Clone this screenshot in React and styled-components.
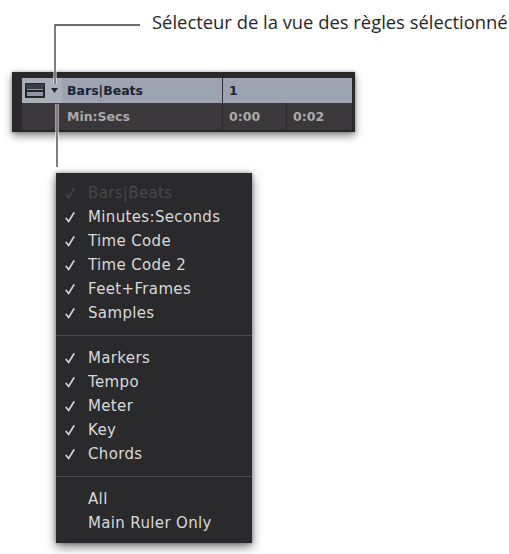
import React from "react";
import styled, { createGlobalStyle } from "styled-components";

const GlobalStyle = createGlobalStyle`
  html, body {
    margin: 0;
    padding: 0;
    background: #ffffff;
  }
`;

const Page = styled.div`
  position: relative;
  width: 509px;
  height: 554px;
  background: #ffffff;
  overflow: hidden;
`;

const Callout = styled.div`
  height: 62px;
  padding: 10px 0 0 152px;
  font-family: "Open Sans", "DejaVu Sans", sans-serif;
  font-size: 18.4px;
  line-height: 24px;
  color: #262626;
  white-space: nowrap;
`;

const Ruler = styled.div`
  margin-left: 12px;
  width: 330px;
  padding: 6px 3px 2px 10px;
  background: #2a2829;
  box-shadow: 0 4px 8px rgba(0, 0, 0, 0.45), 0 0 3px rgba(0, 0, 0, 0.3);
`;

const Row = styled.div`
  display: grid;
  grid-template-columns: 40px 160px 64px 1fr;
  height: ${(p) => p.h}px;
  background: ${(p) => (p.light ? "#9ba4b0" : "#3a383a")};
  font-family: "DejaVu Sans", sans-serif;
  font-weight: bold;
  font-size: 12.5px;
  color: ${(p) => (p.light ? "#1c2230" : "#aaaaaa")};
`;

const Selector = styled.div`
  display: flex;
  align-items: center;
  gap: 6px;
  padding-left: 3px;
  background: ${(p) => (p.light ? "#a9afb8" : "transparent")};
`;

const Cell = styled.div`
  display: flex;
  align-items: center;
  padding-left: ${(p) => p.pad || 6}px;
  border-left: ${(p) => (p.divider ? `1px solid ${p.divider}` : "none")};
  grid-column: ${(p) => p.span || "auto"};
  white-space: nowrap;
`;

const Menu = styled.div`
  margin: 41px 0 0 56px;
  width: 196px;
  padding: 8px 0;
  background: #2a292c;
  box-shadow: 0 4px 10px rgba(0, 0, 0, 0.5), 0 0 4px rgba(0, 0, 0, 0.35);
  font-family: "DejaVu Sans", sans-serif;
  font-size: 15px;
  letter-spacing: 0.35px;
`;

const Item = styled.div`
  display: flex;
  align-items: center;
  height: 24px;
  color: ${(p) => (p.disabled ? "#48474a" : "#d9d9d9")};
`;

const CheckSlot = styled.span`
  display: flex;
  align-items: center;
  width: 32px;
  padding-left: 9px;
  box-sizing: border-box;
`;

const Separator = styled.div`
  height: 1px;
  margin: 10px 0;
  background: #48474b;
`;

const Leaders = styled.svg`
  position: absolute;
  top: 0;
  left: 0;
  pointer-events: none;
`;

const CheckMark = ({ dim }) => (
  <svg width="10" height="11" viewBox="0 0 10 11">
    <path
      d="M1.2 6.4 L3.6 9.6 L8.8 1"
      fill="none"
      stroke={dim ? "#47464a" : "#d4d4d4"}
      strokeWidth="1.7"
      strokeLinecap="round"
      strokeLinejoin="round"
    />
  </svg>
);

const ViewIcon = () => (
  <svg width="20" height="15" viewBox="0 0 20 15">
    <rect x="1" y="1" width="18" height="13" fill="#8e96a2" stroke="#23262c" strokeWidth="2" />
    <rect x="1" y="1" width="18" height="5" fill="#3a3d44" />
    <line x1="1" y1="8" x2="19" y2="8" stroke="#23262c" strokeWidth="2" />
  </svg>
);

const Caret = () => (
  <svg width="7" height="5" viewBox="0 0 7 5">
    <path d="M0 0 H7 L3.5 5 Z" fill="#1c2230" />
  </svg>
);

const groups = [
  [
    { label: "Bars|Beats", disabled: true },
    { label: "Minutes:Seconds" },
    { label: "Time Code" },
    { label: "Time Code 2" },
    { label: "Feet+Frames" },
    { label: "Samples" },
  ],
  [
    { label: "Markers" },
    { label: "Tempo" },
    { label: "Meter" },
    { label: "Key" },
    { label: "Chords" },
  ],
  [
    { label: "All", plain: true },
    { label: "Main Ruler Only", plain: true },
  ],
];

const App = () => {
  return (
    <>
      <GlobalStyle />
      <Page>
        <Callout>Sélecteur de la vue des règles sélectionné</Callout>

        <Ruler>
          <Row light h={25}>
            <Selector light>
              <ViewIcon />
              <Caret />
            </Selector>
            <Cell pad={5}>Bars|Beats</Cell>
            <Cell divider="#2c2f36" span="3 / 5">
              1
            </Cell>
          </Row>
          <Row h={27}>
            <Selector />
            <Cell pad={5}>Min:Secs</Cell>
            <Cell divider="#2a2829">0:00</Cell>
            <Cell divider="#2a2829">0:02</Cell>
          </Row>
        </Ruler>

        <Menu>
          {groups.map((group, gi) => (
            <React.Fragment key={gi}>
              {gi > 0 && <Separator />}
              {group.map((it) => (
                <Item key={it.label} disabled={it.disabled}>
                  <CheckSlot>{!it.plain && <CheckMark dim={it.disabled} />}</CheckSlot>
                  {it.label}
                </Item>
              ))}
            </React.Fragment>
          ))}
        </Menu>

        <Leaders width="509" height="554">
          <path d="M140 25 H55 V84" fill="none" stroke="#ffffff" strokeWidth="3" />
          <path d="M140 25 H55 V84" fill="none" stroke="#3a3a3a" strokeWidth="1.3" />
          <path d="M57 104 V167" fill="none" stroke="#ffffff" strokeWidth="3" />
          <path d="M57 104 V167" fill="none" stroke="#3a3a3a" strokeWidth="1.3" />
        </Leaders>
      </Page>
    </>
  );
};

export default App;
